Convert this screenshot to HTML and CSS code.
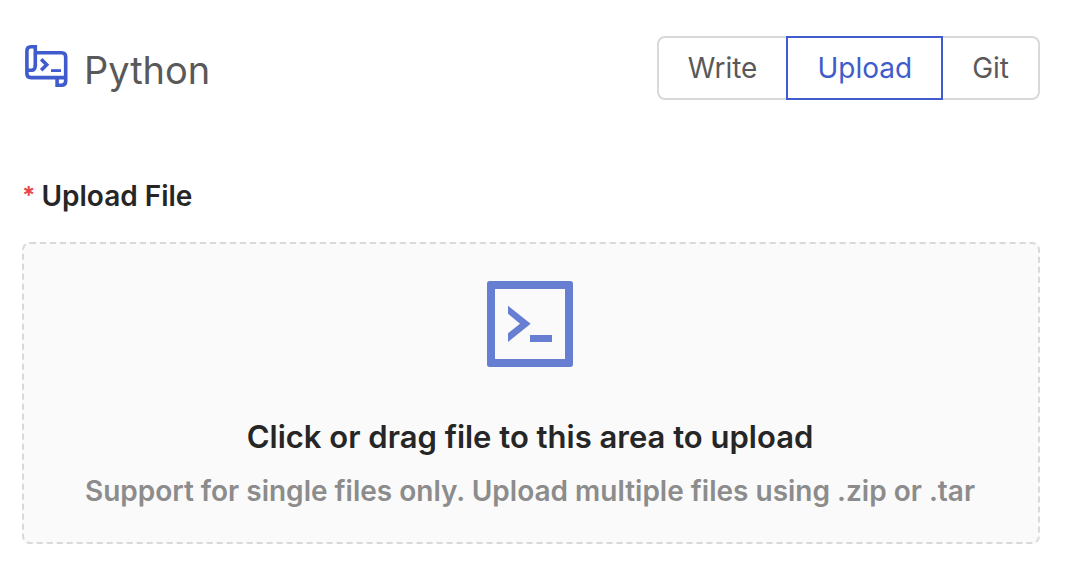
FILE: index.html
```html
<!DOCTYPE html>
<html lang="en">
<head>
<meta charset="utf-8">
<meta name="viewport" content="width=device-width, initial-scale=1">
<title>Python</title>
<link rel="stylesheet" href="styles.css">
</head>
<body>
<main class="page">
  <header class="header">
    <div class="brand">
      <svg class="brand-icon" viewBox="0 0 44 44" fill="none" stroke="currentColor" stroke-width="3.600" aria-hidden="true">
        <path d="M11.300 22V2.800H7Q2.900 2.800 2.900 7V29.500Q2.900 33.600 7 33.600H41"/>
        <path d="M3 26.300H7.500Q11.300 26.300 11.300 21"/>
        <path d="M11.300 8.800H37.500Q41.700 8.800 41.700 13V37Q41.700 41.200 37.500 41.200H33.100V33.600"/>
        <path d="M17.200 15.200L22.700 20.700L17.200 26.200"/>
        <path d="M27 26.600H37" stroke-width="2.800"/>
      </svg>
      <h1 class="title">Python</h1>
    </div>
    <div class="segmented" role="radiogroup" aria-label="Source">
      <label class="segment"><input class="hidden-input" type="radio" name="source" value="write"><span>Write</span></label>
      <label class="segment"><input class="hidden-input" type="radio" name="source" value="upload" checked><span>Upload</span></label>
      <label class="segment"><input class="hidden-input" type="radio" name="source" value="git"><span>Git</span></label>
    </div>
  </header>
  <form class="field">
    <label class="field-label" for="file"><span class="required">*</span>Upload File</label>
    <label class="dropzone">
      <input class="hidden-input" id="file" type="file" required>
      <svg class="dropzone-icon" viewBox="0 0 258 258" fill="currentColor" aria-hidden="true">
        <path fill-rule="evenodd" d="M8 0H250Q258 0 258 8V250Q258 258 250 258H8Q0 258 0 250V8Q0 0 8 0ZM24 24V234H234V24Z"/>
        <path d="M63 74L131 128L63 183V157L99 128L63 98Z"/>
        <path d="M129 162H195V183H129Z"/>
      </svg>
      <span class="dropzone-title">Click or drag file to this area to upload</span>
      <span class="dropzone-hint">Support for single files only. Upload multiple files using .zip or .tar</span>
    </label>
  </form>
</main>
</body>
</html>
```
FILE: styles.css
```css
* {
  box-sizing: border-box;
}

body {
  margin: 0;
  background: #fff;
  color: #262626;
  font-family: Inter, "Liberation Sans", sans-serif;
  font-size: 28px;
}

.page {
  padding: 36px 42px 26px 22px;
}

.header {
  display: flex;
  align-items: center;
  justify-content: space-between;
}

.brand {
  display: flex;
  align-items: center;
  gap: 16px;
  padding-left: 2px;
  color: #3f5bcc;
}

.brand-icon {
  width: 44px;
  height: 44px;
  margin-bottom: 4px;
}

.title {
  margin: 0;
  padding-top: 4px;
  color: #595959;
  font-size: 38px;
  font-weight: 400;
  line-height: 48px;
}

.segmented {
  display: flex;
  color: #595959;
}

.segment {
  position: relative;
  height: 64px;
  padding: 0 29px;
  border: 2px solid #d9d9d9;
  line-height: 60px;
  cursor: pointer;
}

.segment + .segment {
  margin-left: -2px;
}

.segment:first-child {
  border-radius: 8px 0 0 8px;
}

.segment:last-child {
  border-radius: 0 8px 8px 0;
}

.segment:has(:checked) {
  z-index: 1;
  border-color: #3f5bcc;
  color: #3f5bcc;
}

.hidden-input {
  position: absolute;
  width: 1px;
  height: 1px;
  margin: 0;
  opacity: 0;
}

.field {
  display: flex;
  flex-direction: column;
  gap: 24px;
  margin-top: 74px;
}

.field-label {
  display: flex;
  gap: 6px;
  font-weight: 600;
  line-height: 44px;
}

.required {
  color: #e84749;
  font-size: 24px;
  font-weight: 700;
}

.dropzone {
  position: relative;
  display: flex;
  flex-direction: column;
  align-items: center;
  padding: 37px 18px 29px 16px;
  border: 2px dashed #d9d9d9;
  border-radius: 8px;
  background: #fafafa;
  text-align: center;
  cursor: pointer;
}

.dropzone-icon {
  width: 86px;
  height: 86px;
  margin-bottom: 44px;
  color: #677fd3;
}

.dropzone-title {
  margin-bottom: 6px;
  font-size: 31px;
  font-weight: 600;
  line-height: 52px;
}

.dropzone-hint {
  color: #8c8c8c;
  font-weight: 600;
  line-height: 44px;
}
```
